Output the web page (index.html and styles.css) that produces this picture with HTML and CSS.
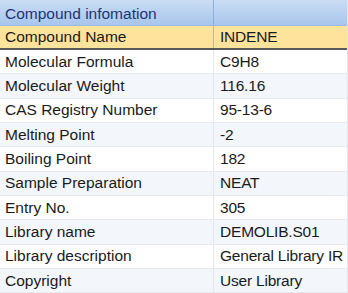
FILE: index.html
```html
<!DOCTYPE html>
<html>
<head>
<meta charset="utf-8">
<link rel="stylesheet" href="styles.css">
</head>
<body>
<div class="grid">
  <div class="row head"><div class="c1">Compound infomation</div><div class="c2"></div></div>
  <div class="row sel"><div class="c1">Compound Name</div><div class="c2">INDENE</div></div>
  <div class="row"><div class="c1">Molecular Formula</div><div class="c2">C9H8</div></div>
  <div class="row alt"><div class="c1">Molecular Weight</div><div class="c2">116.16</div></div>
  <div class="row"><div class="c1">CAS Registry Number</div><div class="c2">95-13-6</div></div>
  <div class="row alt"><div class="c1">Melting Point</div><div class="c2">-2</div></div>
  <div class="row"><div class="c1">Boiling Point</div><div class="c2">182</div></div>
  <div class="row alt"><div class="c1">Sample Preparation</div><div class="c2">NEAT</div></div>
  <div class="row"><div class="c1">Entry No.</div><div class="c2">305</div></div>
  <div class="row alt"><div class="c1">Library name</div><div class="c2">DEMOLIB.S01</div></div>
  <div class="row"><div class="c1">Library description</div><div class="c2">General Library IR</div></div>
  <div class="row alt"><div class="c1">Copyright</div><div class="c2">User Library</div></div>
</div>
</body>
</html>
```
FILE: styles.css
```css
html, body { margin: 0; padding: 0; background: #ffffff; }
body { font-family: "Liberation Sans", Arial, sans-serif; font-size: 15.5px; color: #1a1a1a; }
.grid { width: 348px; display: flex; flex-direction: column; border-right: 1px solid #e3e6ea; box-sizing: border-box; }
.row { display: flex; height: 24.33px; border-bottom: 1px solid #e6e9ee; box-sizing: border-box; white-space: nowrap; }
.row .c1 { width: 214px; padding-left: 5px; box-sizing: border-box; display: flex; align-items: center; border-right: 1px solid #e3e6ea; }
.row .c2 { flex: 1; min-width: 0; padding-left: 6px; display: flex; align-items: center; overflow: hidden; letter-spacing: -0.2px; }
.alt { background: #f3f6fa; }
.head { height: 26px; background: linear-gradient(#c9dcf3, #a8c6ec); border-bottom: 1px solid #9cbbe2; color: #1c3576; }
.head .c1 { border-right: 1px solid #8fb0de; padding-top: 2px; }
.sel { height: 24px; background: #fee39c; border-bottom: 2px solid #5a5a5a; }
.sel .c1 { border-right: 1px solid #c8b98a; }
```
